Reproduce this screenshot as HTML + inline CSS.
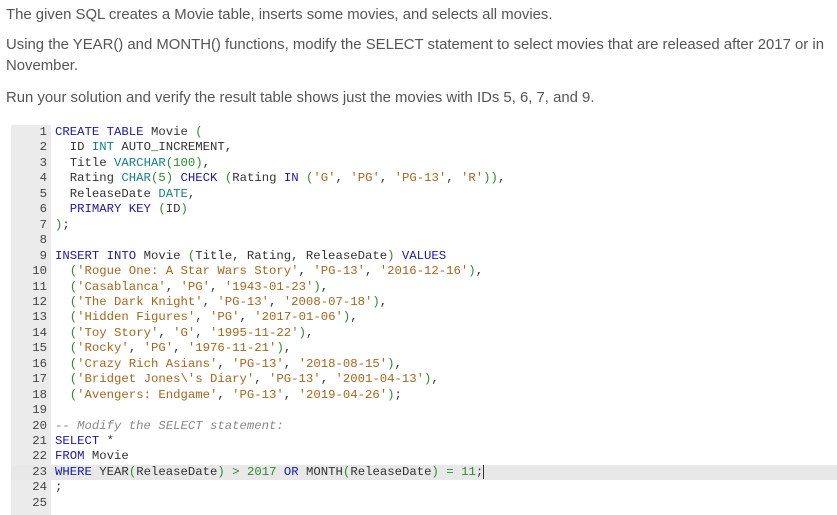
<html><head><style>
body{margin:0;background:#fff;width:837px;height:510px;overflow:hidden;font-family:"Liberation Sans",sans-serif;color:#555}
p{margin:0;position:absolute;left:6px;font-size:14.9px;line-height:21px}
#ed{position:absolute;left:11px;top:125px;width:826px;height:390px;font-family:"Liberation Mono",monospace;font-size:12.3px}
#g{position:absolute;left:0;top:0;width:40px;height:100%;background:#ebebeb}
.l{position:absolute;left:0;height:15.45px;line-height:15.45px;width:826px;white-space:pre;color:#333}
.l b{font-weight:normal;display:inline-block;width:44px;text-align:right;padding-right:8px;box-sizing:border-box;color:#444}
.hl{background:#e8e8e8}
.k{color:#1a1aa6}.t{color:#168282}.p{color:#2f8a2f}.s{color:#a6661e}.n{color:#2f8a2f}.c{color:#888;font-style:italic}
</style></head><body>
<p style="top:5px">The given SQL creates a Movie table, inserts some movies, and selects all movies.</p>
<p style="top:35px">Using the YEAR() and MONTH() functions, modify the SELECT statement to select movies that are released after 2017 or in<br>November.</p>
<p style="top:88px">Run your solution and verify the result table shows just the movies with IDs 5, 6, 7, and 9.</p>
<div id="ed"><div id="g"></div>
<div class="l" style="top:0"><b>1</b><span class="k">CREATE TABLE</span> Movie <span class="p">(</span></div>
<div class="l" style="top:15.45px"><b>2</b>  ID <span class="t">INT</span> AUTO_INCREMENT,</div>
<div class="l" style="top:30.9px"><b>3</b>  Title <span class="t">VARCHAR</span><span class="p">(</span><span class="n">100</span><span class="p">)</span>,</div>
<div class="l" style="top:46.35px"><b>4</b>  Rating <span class="t">CHAR</span><span class="p">(</span><span class="n">5</span><span class="p">)</span> <span class="k">CHECK</span> <span class="p">(</span>Rating <span class="k">IN</span> <span class="p">(</span><span class="s">'G'</span>, <span class="s">'PG'</span>, <span class="s">'PG-13'</span>, <span class="s">'R'</span><span class="p">))</span>,</div>
<div class="l" style="top:61.8px"><b>5</b>  ReleaseDate <span class="t">DATE</span>,</div>
<div class="l" style="top:77.25px"><b>6</b>  <span class="k">PRIMARY KEY</span> <span class="p">(</span>ID<span class="p">)</span></div>
<div class="l" style="top:92.7px"><b>7</b><span class="p">)</span>;</div>
<div class="l" style="top:108.15px"><b>8</b></div>
<div class="l" style="top:123.6px"><b>9</b><span class="k">INSERT INTO</span> Movie <span class="p">(</span>Title, Rating, ReleaseDate<span class="p">)</span> <span class="k">VALUES</span></div>
<div class="l" style="top:139.05px"><b>10</b>  <span class="p">(</span><span class="s">'Rogue One: A Star Wars Story'</span>, <span class="s">'PG-13'</span>, <span class="s">'2016-12-16'</span><span class="p">)</span>,</div>
<div class="l" style="top:154.5px"><b>11</b>  <span class="p">(</span><span class="s">'Casablanca'</span>, <span class="s">'PG'</span>, <span class="s">'1943-01-23'</span><span class="p">)</span>,</div>
<div class="l" style="top:169.95px"><b>12</b>  <span class="p">(</span><span class="s">'The Dark Knight'</span>, <span class="s">'PG-13'</span>, <span class="s">'2008-07-18'</span><span class="p">)</span>,</div>
<div class="l" style="top:185.4px"><b>13</b>  <span class="p">(</span><span class="s">'Hidden Figures'</span>, <span class="s">'PG'</span>, <span class="s">'2017-01-06'</span><span class="p">)</span>,</div>
<div class="l" style="top:200.85px"><b>14</b>  <span class="p">(</span><span class="s">'Toy Story'</span>, <span class="s">'G'</span>, <span class="s">'1995-11-22'</span><span class="p">)</span>,</div>
<div class="l" style="top:216.3px"><b>15</b>  <span class="p">(</span><span class="s">'Rocky'</span>, <span class="s">'PG'</span>, <span class="s">'1976-11-21'</span><span class="p">)</span>,</div>
<div class="l" style="top:231.75px"><b>16</b>  <span class="p">(</span><span class="s">'Crazy Rich Asians'</span>, <span class="s">'PG-13'</span>, <span class="s">'2018-08-15'</span><span class="p">)</span>,</div>
<div class="l" style="top:247.2px"><b>17</b>  <span class="p">(</span><span class="s">'Bridget Jones\'s Diary'</span>, <span class="s">'PG-13'</span>, <span class="s">'2001-04-13'</span><span class="p">)</span>,</div>
<div class="l" style="top:262.65px"><b>18</b>  <span class="p">(</span><span class="s">'Avengers: Endgame'</span>, <span class="s">'PG-13'</span>, <span class="s">'2019-04-26'</span><span class="p">)</span>;</div>
<div class="l" style="top:278.1px"><b>19</b></div>
<div class="l" style="top:293.55px"><b>20</b><span class="c">-- Modify the SELECT statement:</span></div>
<div class="l" style="top:309px"><b>21</b><span class="k">SELECT</span> *</div>
<div class="l" style="top:324.45px"><b>22</b><span class="k">FROM</span> Movie</div>
<div class="l hl" style="top:339.9px"><b>23</b><span class="k">WHERE</span> YEAR<span class="p">(</span>ReleaseDate<span class="p">)</span> <span class="p">&gt;</span> <span class="n">2017</span> <span class="k">OR</span> MONTH<span class="p">(</span>ReleaseDate<span class="p">)</span> <span class="p">=</span> <span class="n">11</span>;<span style="border-left:1px solid #333"></span></div>
<div class="l" style="top:355.35px"><b>24</b>;</div>
<div class="l" style="top:370.8px"><b>25</b></div>
</div>
</body></html>
